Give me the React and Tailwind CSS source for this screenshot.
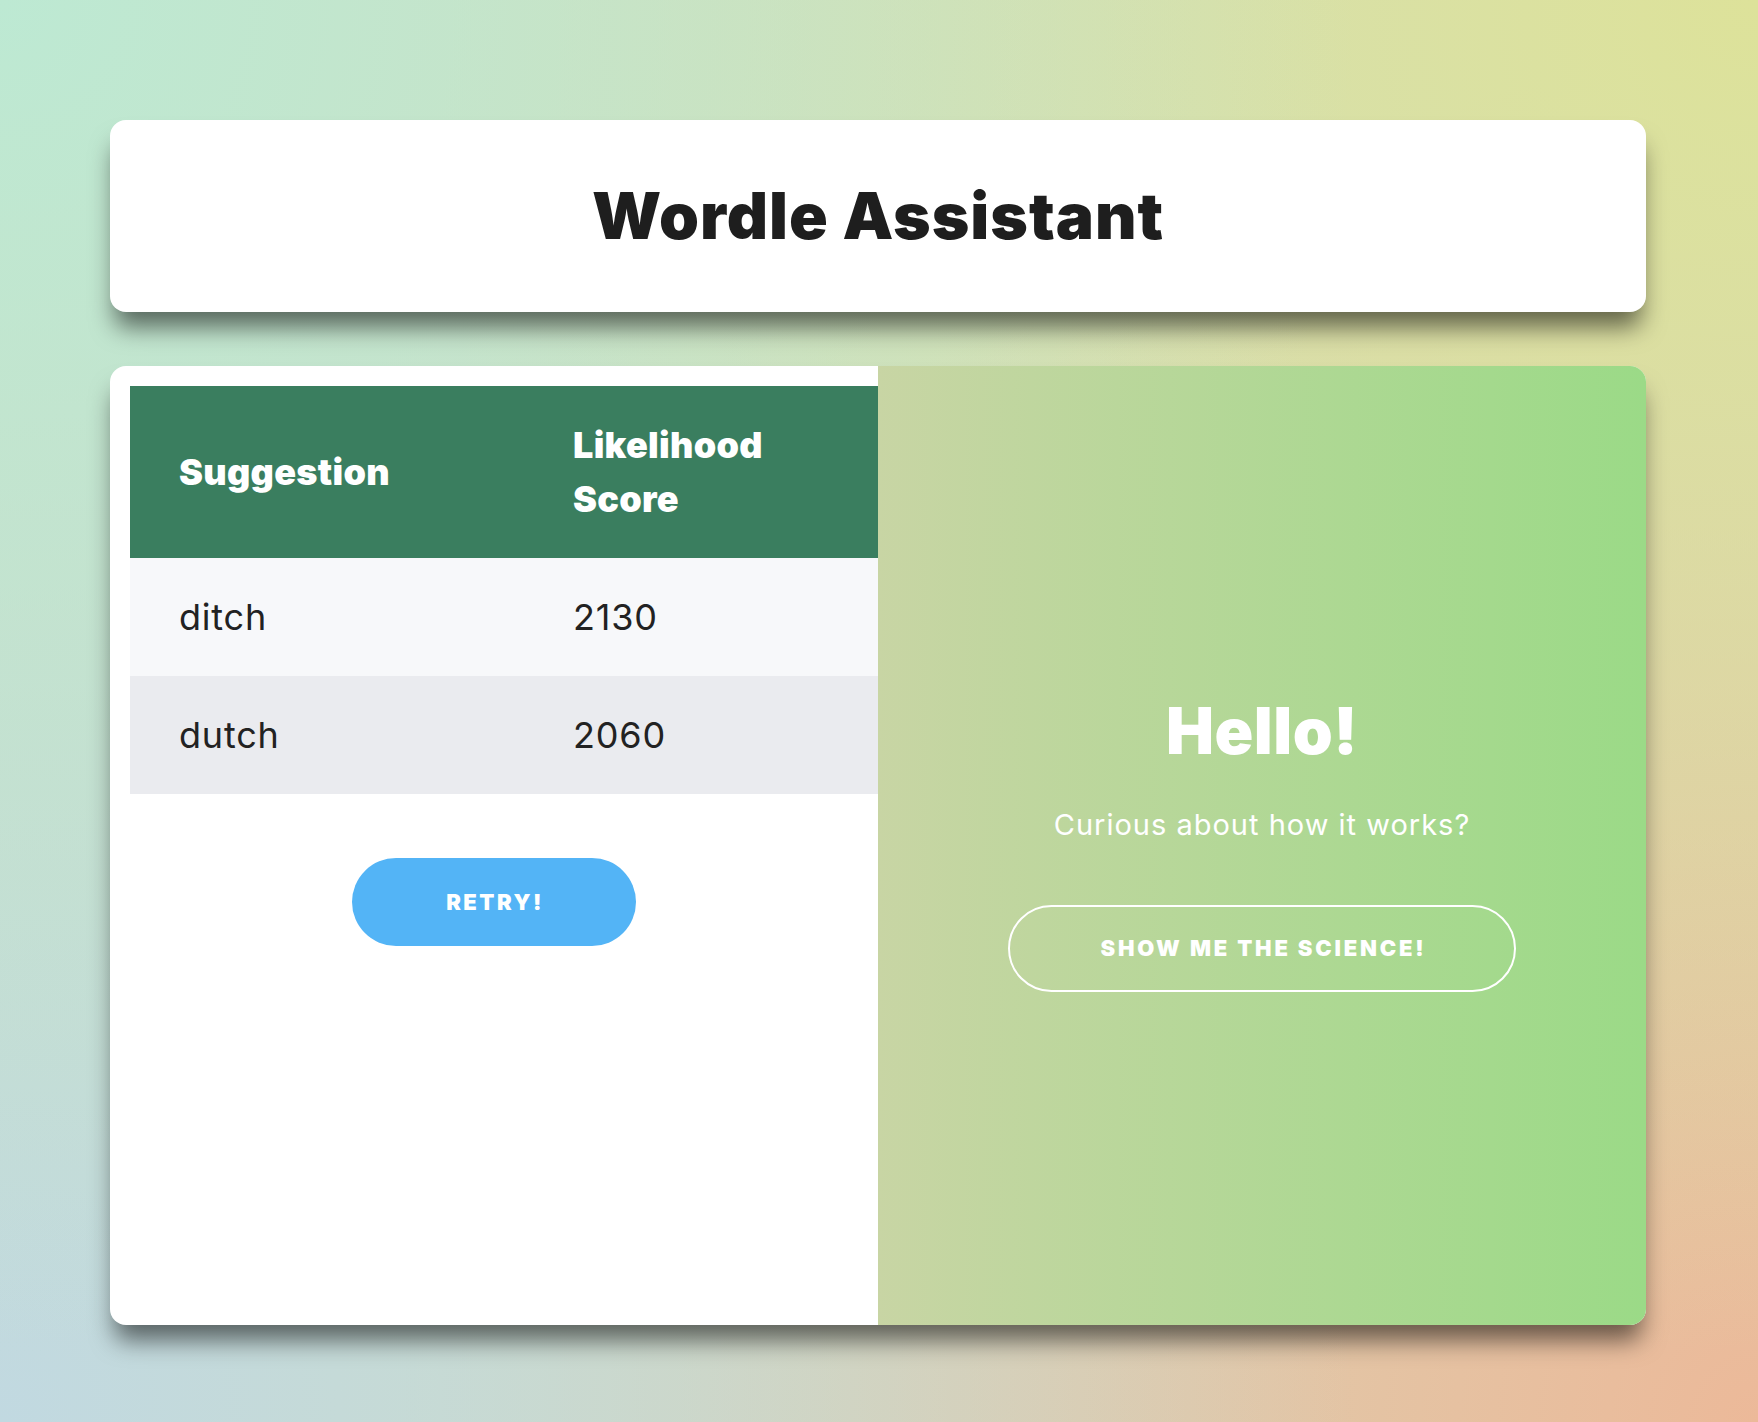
export default function App() {
  return (
    <div className="min-h-screen w-full pl-[110px] pr-[112px] pt-[120px] pb-[97px] font-[Inter,'Noto_Sans',sans-serif] bg-[radial-gradient(circle_at_0%_0%,#bde9d3_0%,rgba(189,233,211,0)_60%),radial-gradient(circle_at_100%_0%,#dde29a_0%,rgba(221,226,154,0)_60%),radial-gradient(circle_at_0%_100%,#c1d9e1_0%,rgba(193,217,225,0)_60%),radial-gradient(circle_at_100%_100%,#ecb999_0%,rgba(236,185,153,0)_60%),linear-gradient(#d1ddbd,#d1ddbd)]">
      <div className="flex h-[192px] items-center justify-center rounded-2xl bg-white shadow-[0_20px_25px_-5px_rgba(0,0,0,0.55)]">
        <h1 className="text-[64px] font-black leading-none tracking-[1px] text-[#1e1e1e]">
          Wordle Assistant
        </h1>
      </div>

      <div className="mt-[54px] grid h-[959px] grid-cols-2 overflow-hidden rounded-2xl bg-white shadow-[0_20px_25px_-5px_rgba(0,0,0,0.55)]">
        <div className="flex flex-col">
          <div className="pl-5 pt-5">
            <div className="grid grid-cols-[394px_1fr] bg-[#3a7e5f] py-8 text-[36px] font-black leading-[54px] tracking-[0.3px] text-white">
              <div className="self-center pl-[49px]">Suggestion</div>
              <div className="pl-[49px]">
                Likelihood
                <br />
                Score
              </div>
            </div>
            <div className="grid h-[118px] grid-cols-[394px_1fr] items-center bg-[#f7f8fa] text-[36px] font-normal tracking-[0.8px] text-[#222222]">
              <div className="pl-[49px]">ditch</div>
              <div className="pl-[49px]">2130</div>
            </div>
            <div className="grid h-[118px] grid-cols-[394px_1fr] items-center bg-[#eaebef] text-[36px] font-normal tracking-[0.8px] text-[#222222]">
              <div className="pl-[49px]">dutch</div>
              <div className="pl-[49px]">2060</div>
            </div>
          </div>
          <div className="mt-16 flex justify-center">
            <button className="h-[88px] w-[284px] rounded-full bg-[#53b4f6] pl-[2px] text-[22px] font-black uppercase tracking-[2.5px] text-white">
              Retry!
            </button>
          </div>
        </div>

        <div className="flex flex-col items-center justify-center bg-[linear-gradient(to_right,#c8d5a4,#9bda87)] text-white">
          <h2 className="text-[64px] font-black leading-none tracking-[0.5px]">Hello!</h2>
          <p className="mt-[47px] text-[29px] font-normal leading-none tracking-[1px]">
            Curious about how it works?
          </p>
          <button className="mt-[66px] h-[87px] w-[508px] rounded-full border-2 border-white pl-[3px] text-[22px] font-black uppercase tracking-[2.8px] text-white">
            Show me the science!
          </button>
        </div>
      </div>
    </div>
  );
}
